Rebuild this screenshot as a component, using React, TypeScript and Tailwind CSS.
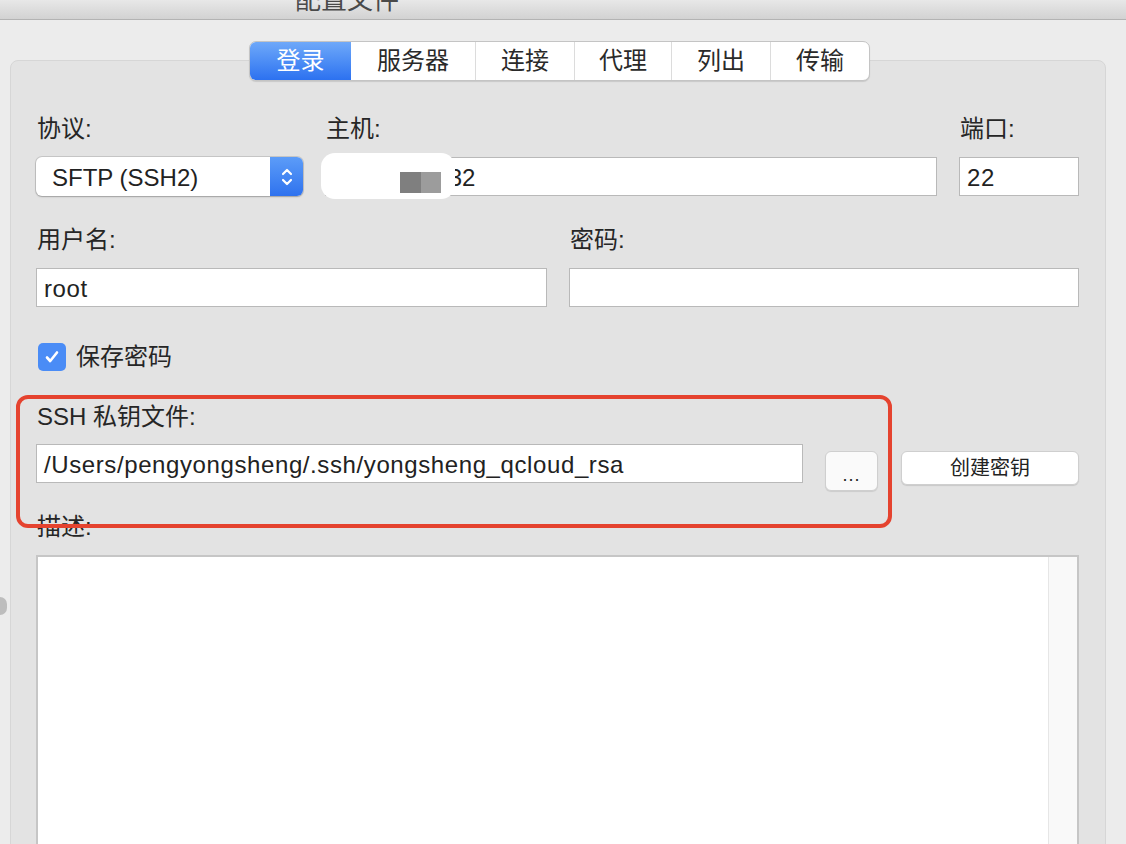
import React from 'react';

const font = { fontFamily: '"Liberation Sans", "Noto Sans CJK SC", sans-serif' };

const tabs = [
    { name: '登录', w: 'w-[101px]' },
    { name: '服务器', w: 'w-[124px]' },
    { name: '连接', w: 'w-[99px]' },
    { name: '代理', w: 'w-[97px]' },
    { name: '列出', w: 'w-[99px]' },
    { name: '传输', w: 'w-[99px]' },
];

const Label = ({ text }: { text: string }) => (
    <div className="h-[30px] leading-[30px] text-[24px] text-[#262626] pl-[1px]">{text}</div>
);

const Field = ({ value, className }: { value?: string; className: string }) => (
    <div className={`${className} h-[39px] bg-white border border-[#b9b9b9] flex items-center px-[7px] pt-[2px] text-[24px] text-[#222] tracking-[0.6px] overflow-hidden whitespace-nowrap`}>
        {value}
    </div>
);

const App = () => {
    const [savePass, setSavePass] = React.useState(true);

    return (
        <div className="w-[1126px] h-[844px] overflow-hidden bg-[#ececec] relative" style={font}>
            {/* title bar */}
            <div className="h-[20px] overflow-hidden bg-gradient-to-b from-[#e8e8e8] to-[#d2d2d2] border-b border-[#b3b3b3] flex">
                <div className="pl-[295px] -mt-[15px] text-[26px] leading-[30px] text-[#4a4a4a]">配置文件</div>
            </div>

            <div className="absolute left-0 top-[597px] w-[7px] h-[18px] rounded-r-full bg-[#bdbdbd]" />

            <div className="pt-[40px] pl-[10px] pr-[20px]">
                <div className="relative h-[900px] bg-[#e3e3e3] border border-[#d6d6d6] rounded-[8px] pt-[53px] pl-[25px] pr-[26px]">
                    {/* tab strip */}
                    <div className="absolute left-[238px] -top-[20px] flex h-[40px] rounded-[7px] border border-[#c4c4c4] bg-white shadow-[0_1px_1px_rgba(0,0,0,0.12)] overflow-hidden">
                        {tabs.map((t, i) =>
                            <div
                                key={t.name}
                                className={`${t.w} flex items-center justify-center text-[24px] ${i === 0 ? 'bg-gradient-to-b from-[#6ea8f9] to-[#2c71f0] text-white' : 'text-[#2a2a2a]'} ${i > 1 ? 'border-l border-[#dcdcdc]' : ''}`}>
                                {t.name}
                            </div>
                        )}
                    </div>

                    {/* protocol / host / port */}
                    <div className="flex gap-[22px]">
                        <div className="w-[267px] flex flex-col gap-[13px]">
                            <Label text="协议:" />
                            <div className="h-[39px] flex rounded-[6px] bg-white shadow-[0_0_0_1px_rgba(0,0,0,0.12),0_1px_2px_rgba(0,0,0,0.2)] overflow-hidden">
                                <div className="flex-1 flex items-center pl-[16px] pt-[2px] text-[24px] text-[#222]">SFTP (SSH2)</div>
                                <div className="w-[33px] bg-gradient-to-b from-[#5c9cf8] to-[#2f72ee] flex items-center justify-center">
                                    <svg width="14" height="24" viewBox="0 0 14 24" fill="none" stroke="white" strokeWidth="2.2" strokeLinecap="round" strokeLinejoin="round">
                                        <path d="M3 9l4-4 4 4" />
                                        <path d="M3 15l4 4 4-4" />
                                    </svg>
                                </div>
                            </div>
                        </div>
                        <div className="w-[612px] flex flex-col gap-[13px]">
                            <Label text="主机:" />
                            <div className="relative">
                                <div className="h-[39px] bg-white border border-[#b9b9b9] flex items-center pl-[116px] pt-[2px] text-[24px] text-[#222]">
                                    .32
                                </div>
                                <div className="absolute -left-[4px] -top-[4px] w-[134px] h-[46px] rounded-[14px] bg-white" />
                                <div className="absolute left-[75px] top-[15px] w-[21px] h-[21px] bg-[#7f7f7f]" />
                                <div className="absolute left-[96px] top-[15px] w-[20px] h-[21px] bg-[#9c9c9c]" />
                            </div>
                        </div>
                        <div className="w-[120px] flex flex-col gap-[13px]">
                            <Label text="端口:" />
                            <Field value="22" className="w-[120px]" />
                        </div>
                    </div>

                    {/* user / password */}
                    <div className="flex gap-[22px] mt-[29px]">
                        <div className="w-[511px] flex flex-col gap-[13px]">
                            <Label text="用户名:" />
                            <Field value="root" className="w-[511px]" />
                        </div>
                        <div className="w-[510px] flex flex-col gap-[13px]">
                            <Label text="密码:" />
                            <Field className="w-[510px]" />
                        </div>
                    </div>

                    {/* save password */}
                    <div className="flex items-center gap-[10px] mt-[36px] pl-[2px] h-[28px] cursor-pointer" onClick={() => setSavePass(!savePass)}>
                        <div className={`w-[28px] h-[28px] rounded-[5px] flex items-center justify-center ${savePass ? 'bg-[#4a8cf6]' : 'bg-white border border-[#b9b9b9]'}`}>
                            {savePass &&
                                <svg width="18" height="18" viewBox="0 0 18 18" fill="none" stroke="white" strokeWidth="2.6" strokeLinecap="round" strokeLinejoin="round">
                                    <path d="M4 9.5l3.2 3.5L14 4.5" />
                                </svg>}
                        </div>
                        <div className="text-[24px] text-[#262626]">保存密码</div>
                    </div>

                    {/* ssh key */}
                    <div className="mt-[31px] flex flex-col gap-[12px]">
                        <Label text="SSH 私钥文件:" />
                        <div className="flex items-start">
                            <Field value="/Users/pengyongsheng/.ssh/yongsheng_qcloud_rsa" className="w-[767px]" />
                            <div className="ml-[22px] mt-[7px] w-[53px] h-[40px] rounded-[6px] bg-[#fafafa] border border-[#cfcfcf] shadow-[0_1px_1px_rgba(0,0,0,0.1)] flex items-end justify-center pb-[6px] text-[18px] leading-[18px] text-[#222] tracking-[1px]">
                                ...
                            </div>
                            <div className="ml-[23px] mt-[7px] w-[178px] h-[34px] rounded-[6px] bg-white border border-[#cfcfcf] shadow-[0_1px_1px_rgba(0,0,0,0.12)] flex items-center justify-center text-[20px] text-[#222]">
                                创建密钥
                            </div>
                        </div>
                    </div>

                    {/* description */}
                    <div className="mt-[21px] flex flex-col gap-[13px]">
                        <Label text="描述:" />
                        <div className="h-[400px] bg-white border-t-2 border-x-2 border-[#c6c6c6] flex justify-end">
                            <div className="w-[29px] bg-[#f9f9f9] border-l border-[#e6e6e6]" />
                        </div>
                    </div>
                </div>
            </div>

            {/* annotation */}
            <div className="absolute left-[16px] top-[395px] w-[876px] h-[133px] rounded-[12px] border-[4px] border-[#e5432f] pointer-events-none" />
        </div>
    );
};

export default App;
